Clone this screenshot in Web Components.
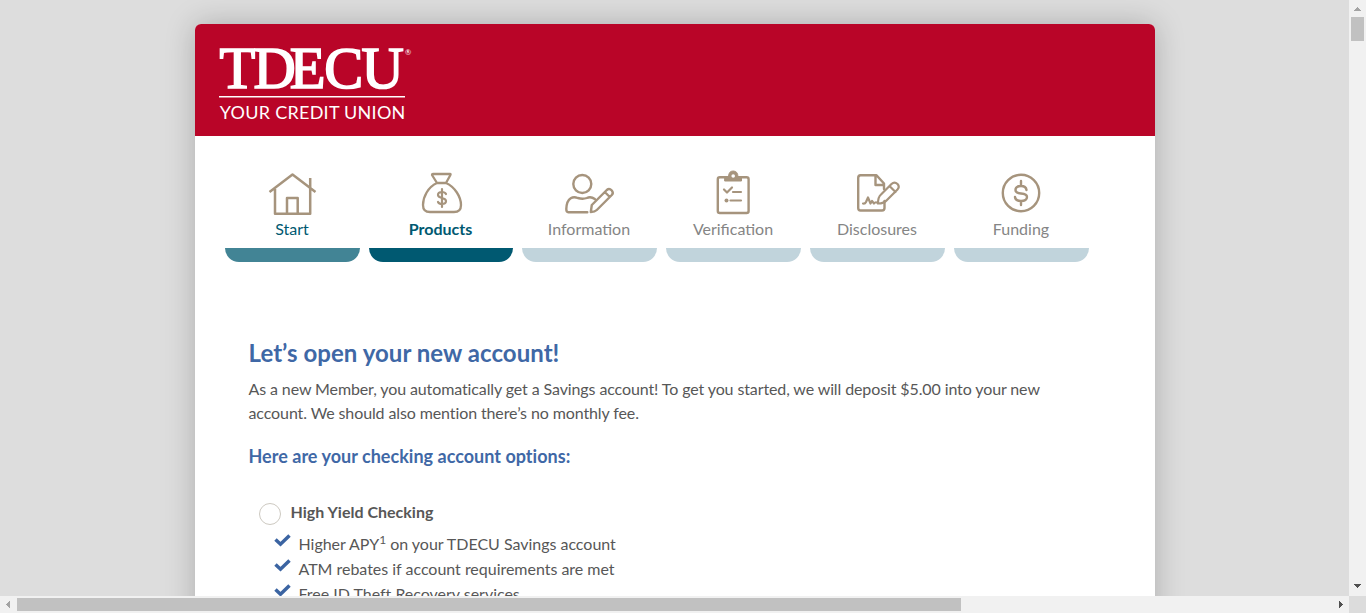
<!DOCTYPE html>
<html lang="en">
<head>
<meta charset="utf-8">
<title>TDECU</title>
<style>
html,body{margin:0;height:100%;overflow:hidden;background:#ddd}
body{font:16px/24px Lato,sans-serif;color:#575757}
</style>
</head>
<body>
<app-window>
  <account-card>
    <credit-logo slot="header"></credit-logo>
    <step-bar slot="steps">
      <step-item icon="home" state="done">Start</step-item>
      <step-item icon="bag" state="current">Products</step-item>
      <step-item icon="person">Information</step-item>
      <step-item icon="clipboard">Verification</step-item>
      <step-item icon="document">Disclosures</step-item>
      <step-item icon="coin">Funding</step-item>
    </step-bar>
    <account-intro>
      <span slot="title">Let’s open your new account!</span>
      <span slot="text">As a new Member, you automatically get a Savings account! To get you started, we will deposit $5.00 into your new<br>account. We should also mention there’s no monthly fee.</span>
      <span slot="subtitle">Here are your checking account options:</span>
    </account-intro>
    <product-option>
      <span slot="name">High Yield Checking</span>
      <check-line>Higher APY<sup style="font-size:12px;line-height:0;position:relative;top:-6px;vertical-align:baseline">1</sup> on your TDECU Savings account</check-line>
      <check-line>ATM rebates if account requirements are met</check-line>
      <check-line>Free ID Theft Recovery services</check-line>
    </product-option>
  </account-card>
</app-window>
<script>
function define(name, html, setup) {
  customElements.define(name, class extends HTMLElement {
    constructor() {
      super();
      this.attachShadow({mode: 'open'}).innerHTML = html;
    }
    connectedCallback() { if (setup) setup(this, this.shadowRoot); }
  });
}

define('scroll-bar', `<style>
:host{display:flex;background:#f1f1f1;align-items:center;box-sizing:border-box;overflow:hidden}
:host([dir-y]){flex-direction:column}
svg{width:17px;height:17px;flex:none;display:block}
.track{flex:1;display:flex;align-self:stretch;padding:2px 0}
.thumb{background:#c1c1c1;width:944px}
:host([dir-y]) .track{padding:0 2px}
:host([dir-y]) .thumb{width:13px;height:24px}
</style>
<svg shape-rendering="crispEdges"><path id="a" fill="#a3a3a3"/></svg><div class="track"><div class="thumb"></div></div><svg shape-rendering="crispEdges"><path id="b" fill="#505050"/></svg>`,
(el, r) => {
  const y = el.hasAttribute('dir-y');
  r.getElementById('a').setAttribute('d', y ? 'M5 11h7v-1h-1v-1h-1v-1H9V7H8v1H7v1H6v1H5z' : 'M10 5v7H9v-1H8v-1H7V9H6V8h1V7h1V6h1V5z');
  r.getElementById('b').setAttribute('d', y ? 'M5 5h7v1h-1v1h-1v1H9v1H8V8H7V7H6V6H5z' : 'M7 5v7h1v-1h1v-1h1V9h1V8h-1V7H9V6H8V5z');
});

define('app-window', `<style>
:host{display:grid;grid-template:minmax(0,1fr) 17px/minmax(0,1fr) 17px;width:100vw;height:100vh;overflow:hidden}
main{overflow:hidden;padding:24px 0 0 195px}
i{background:#dcdcdc}
</style><main><slot></slot></main><scroll-bar dir-y></scroll-bar><scroll-bar></scroll-bar><i></i>`);

define('account-card', `<style>
:host{display:block;width:960px;height:900px;background:#fff;border-radius:6px;box-shadow:0 0 30px rgba(0,0,0,.22)}
header{height:112px;background:#b90528;border-radius:6px 6px 0 0;box-sizing:border-box;padding:6px 0 0 20px}
</style><header><slot name="header"></slot></header><slot name="steps"></slot><slot></slot>`);

define('credit-logo', `<style>
:host{display:block}svg{display:block;overflow:visible}
</style><svg width="200" height="100" viewBox="215 30 200 100" fill="#fff">
<text x="219.4 253.5 289.800 324.300 361.500" y="88" font-family="Liberation Serif,serif" font-size="58.500" stroke="#fff" stroke-width="1.700">TDECU</text>
<rect x="219" y="96" width="186" height="1.5"/>
<text x="219.8" y="118.8" font-family="Lato,sans-serif" font-size="18" textLength="185.5" lengthAdjust="spacing">YOUR CREDIT UNION</text>
<text x="405" y="54.8" font-family="Lato,sans-serif" font-size="7.5">®</text>
</svg>`);

define('step-bar', `<style>
:host{display:flex;gap:9px;padding:32px 30px 0;height:94px}
</style><slot></slot>`);

const icons = {
  home: '<path d="M-22.5 -1 .5-18.5 23.500-1M-17-4V20.800H18.200V-15M-5 20V5H5.700V20" stroke-width="2.500" stroke-linecap="butt"/>',
  bag: '<path d="M-8-19H9Q10-19 9.4-18L5-10H-4L-9-18Q-9-19-8-19ZM-4-10C-13-6-18 4-18 12Q-18 19-11 19H13Q20 19 20 12C20 4 14-6 5-10" stroke-width="2.3"/><path d="M5 1Q4-1 1-1-3-1-3 2-3 4 1 5 5 6 5 8 5 11 1 11-2 11-3 9M1-4V14" stroke-width="2.2"/>',
  person: '<g transform="translate(.8)"><circle cx="-7.500" cy="-9" r="9"/><path d="M-2.500 19.200H-21.500Q-23.500 19.200-23.500 16C-23 3.500-16 3.500-12 5Q-7 6.500-3 5C0 3.500 3 4.500 5 6M1 19 2 12 17-3Q19.500-5 22-2.500 24 0 22 2L7 17Q5 19 1 19ZM15-1 20 4"/></g>',
  clipboard: '<rect x="-15.2" y="-15.700" width="30.800" height="35.700" rx="2"/><path d="M-8-16H-4.500Q-4.500-22 .2-22T5-16H8.500V-12H-8Z" fill="#a6947d" stroke-width="1"/><circle cx=".2" cy="-17" r="1.800" fill="#fff" stroke="none"/><path d="M-9-3.500-6-.5-1-5.500M0-1H8M-2.500 7.500H8" stroke-width="2.200"/><circle cx="-6.500" cy="7.500" r="2" fill="#a6947d" stroke="none"/>',
  document: '<path d="M7-4V-9.500L-.5-17.800H-16.500Q-18.800-17.800-18.800-15V15Q-18.800 17.500-16.500 17.500H5Q7.500 17.500 7.500 15V8M-1.500-17V-8H6.500"/><path d="M-14 10.500Q-12 11-11 9L-9 4.500-6.500 10.500-5 8-3 10.500Q-1 8 1 10.500 1 4 4 1.500L14.500-9Q17.500-12 20.500-9 23-6 20.500-3.500L10 7Q7 10.500 1 10.500M12.500-7 18.500-1" stroke-width="2.200"/>',
  coin: '<circle cx="0" cy="0" r="18.2"/><path d="M5.5-3Q5-7 0-7-5.5-7-5.5-3-5.5 0 0 .5 6 1 6 4 6 8 0 8-5.5 8-6 4M0-12V-7M0 8V12" stroke-width="2.4"/>'
};
define('step-item', `<style>
:host{display:flex;flex-direction:column;align-items:center;width:135px;height:94px;color:#858585}
:host([state=done]){color:#005971}
:host([state=current]){color:#005971;font-weight:bold;width:144px}
svg{width:54px;height:50px;flex:none;overflow:visible}
:host(:not([state=current])) svg{margin-right:1px}
span{height:24px;line-height:24px;margin-top:-1px;margin-bottom:7px;padding-right:1px}
i{height:14px;align-self:stretch;border-radius:0 0 14px 14px;background:#c1d4dc}
:host([state=done]) i{background:#428495}
:host([state=current]) i{background:#005971}
</style><svg viewBox="-27 -25 54 50" fill="none" stroke="#a6947d" stroke-width="2.4" stroke-linecap="round" stroke-linejoin="round"></svg><span><slot></slot></span><i></i>`,
(el, r) => { r.querySelector('svg').innerHTML = icons[el.getAttribute('icon')]; });

define('account-intro', `<style>
:host{display:block;padding:75px 53.5px 0}
h1,h2,p{margin:0}
h1{font-size:24px;line-height:32px;color:#3f68a6;font-weight:bold;letter-spacing:.05px}
p{padding-top:8px;white-space:nowrap;letter-spacing:-.11px}
h2{font-size:18px;line-height:24px;color:#3f68a6;font-weight:bold;padding-top:19px;letter-spacing:0.02px}
</style><h1><slot name="title"></slot></h1><p><slot name="text"></slot></p><h2><slot name="subtitle"></slot></h2>`);

define('product-option', `<style>
:host{display:block;padding:32px 0 0 64px}
.head{display:flex;gap:9.5px;font-weight:bold}
.radio{width:20px;height:20px;border:1px solid #cdc9c1;border-radius:50%;margin-top:3px}
.list{padding:8px 0 0 15px}
</style><div class="head"><div class="radio"></div><slot name="name"></slot></div><div class="list"><slot></slot></div>`);

define('check-line', `<style>
:host{display:flex;height:25px;line-height:21px;white-space:nowrap;letter-spacing:-.02px}
svg{width:18px;height:16px;margin:0 6.5px 0 0;flex:none}
</style><svg viewBox="0 0 18 16" fill="none" stroke="#3b64a2" stroke-width="3.5"><path d="M1.500 6.500 6.500 11.200 15.500 2.500"/></svg><div><slot></slot></div>`);
</script>
</body>
</html>
